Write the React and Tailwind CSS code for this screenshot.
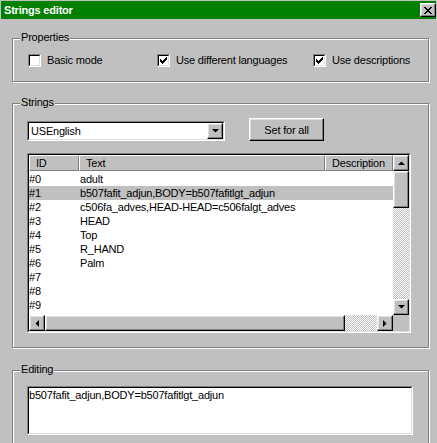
import React from "react";

// classic 3D edges
const raised =
  "border border-t-white border-l-white border-r-black border-b-black shadow-[inset_-1px_-1px_0_#808080,inset_1px_1px_0_#dfdfdf]";
const checker =
  "bg-[repeating-conic-gradient(#c0c0c0_0_25%,#fff_0_50%)] bg-[length:2px_2px]";

const rows = [
  ["#0", "adult"],
  ["#1", "b507fafit_adjun,BODY=b507fafitlgt_adjun"],
  ["#2", "c506fa_adves,HEAD-HEAD=c506falgt_adves"],
  ["#3", "HEAD"],
  ["#4", "Top"],
  ["#5", "R_HAND"],
  ["#6", "Palm"],
  ["#7", ""],
  ["#8", ""],
  ["#9", ""],
  ["#10", ""],
];

function Sunken({ className = "", innerClassName = "", children }) {
  return (
    <div
      className={`border border-t-[#808080] border-l-[#808080] border-r-white border-b-white ${className}`}
    >
      <div
        className={`h-full border border-t-black border-l-black border-r-[#dfdfdf] border-b-[#dfdfdf] ${innerClassName}`}
      >
        {children}
      </div>
    </div>
  );
}

function Group({ label, className = "", children }) {
  return (
    <div
      className={`relative ml-[12px] w-[417px] border border-[#808080] shadow-[inset_1px_1px_0_#fff,1px_1px_0_#fff] ${className}`}
    >
      <span className="absolute -top-[9px] left-[7px] bg-[#c0c0c0] px-px leading-[14px]">
        {label}
      </span>
      {children}
    </div>
  );
}

function Arrow({ dir }) {
  const pts = {
    up: "0,4 7,4 3.5,0.5",
    down: "0,0 7,0 3.5,3.5",
    left: "4,0 4,7 0.5,3.5",
    right: "0,0 0,7 3.5,3.5",
  }[dir];
  const vertical = dir === "up" || dir === "down";
  return (
    <svg
      width={vertical ? 7 : 4}
      height={vertical ? 4 : 7}
      viewBox={vertical ? "0 0 7 4" : "0 0 4 7"}
    >
      <polygon points={pts} fill="#000" />
    </svg>
  );
}

function ScrollButton({ dir, className = "" }) {
  return (
    <div
      className={`w-[16px] h-[16px] shrink-0 flex items-center justify-center bg-[#c0c0c0] ${raised} ${className}`}
    >
      <Arrow dir={dir} />
    </div>
  );
}

function Checkbox({ checked, label, className = "" }) {
  return (
    <div className={`flex items-center gap-[6px] ${className}`}>
      <Sunken
        className="w-[13px] h-[13px] shrink-0"
        innerClassName="bg-white flex items-center justify-center"
      >
        {checked && (
          <svg width="7" height="7" viewBox="0 0 7 7" shapeRendering="crispEdges">
            <polygon points="0,2 2,4 7,-1 7,2 2,7 0,5" fill="#000" />
          </svg>
        )}
      </Sunken>
      <span className="leading-[14px]">{label}</span>
    </div>
  );
}

export default function App() {
  return (
    <div className="w-[437px] h-[443px] overflow-hidden bg-[#c0c0c0] text-[11px] tracking-[-0.2px] text-black font-['Liberation_Sans',Arial,sans-serif]">
      {/* title bar */}
      <div className="mx-px mt-px h-[18px] bg-[#008000] flex items-center justify-between pl-[3px]">
        <span className="text-white font-bold leading-[14px]">Strings editor</span>
        <div className={`w-[16px] h-[14px] flex items-center justify-center bg-[#c0c0c0] ${raised}`}>
          <svg width="8" height="7" viewBox="0 0 8 7" shapeRendering="crispEdges">
            <path d="M0 0h2l2 2.5 2-2.5h2L5 3.5 8 7H6L4 4.5 2 7H0l3-3.5z" fill="#000" />
          </svg>
        </div>
      </div>

      {/* Properties */}
      <Group label="Properties" className="mt-[19px] h-[44px]">
        <div className="flex pt-[14px] pl-[15px]">
          <Checkbox label="Basic mode" className="w-[129px]" />
          <Checkbox checked label="Use different languages" className="w-[156px]" />
          <Checkbox checked label="Use descriptions" />
        </div>
      </Group>

      {/* Strings */}
      <Group label="Strings" className="mt-[21px] h-[245px]">
        <div className="pt-[14px] pl-[14px]">
          <div className="flex items-start">
            <Sunken className="mt-[3px] w-[198px] h-[20px]" innerClassName="bg-white flex items-center">
              <span className="pl-[2px] flex-1 leading-[14px]">USEnglish</span>
              <ScrollButton dir="down" />
            </Sunken>
            <button
              className={`ml-[24px] w-[75px] h-[23px] bg-[#c0c0c0] leading-[14px] ${raised}`}
            >
              Set for all
            </button>
          </div>

          {/* list view */}
          <Sunken className="mt-[12px] w-[384px] h-[180px]" innerClassName="bg-white flex flex-col">
            <div className="flex h-[160px]">
              <div className="w-[364px] flex flex-col">
                <div className="flex h-[16px] bg-[#c0c0c0] leading-[14px]">
                  <div className="w-[50px] pl-[6px] border border-t-white border-l-white border-r-[#808080] border-b-[#808080]">ID</div>
                  <div className="w-[246px] pl-[6px] border border-t-white border-l-white border-r-[#808080] border-b-[#808080]">Text</div>
                  <div className="w-[68px] pl-[6px] border border-t-white border-l-white border-r-[#808080] border-b-[#808080]">Description</div>
                </div>
                <div className="flex-1 overflow-hidden pt-px">
                  {rows.map(([id, text], i) => (
                    <div
                      key={id}
                      className={`flex h-[14px] leading-[14px] whitespace-nowrap ${i === 1 ? "bg-[#c0c0c0]" : ""}`}
                    >
                      <span className="w-[50px]">{id}</span>
                      <span className="pl-px">{text}</span>
                    </div>
                  ))}
                </div>
              </div>
              {/* vertical scrollbar */}
              <div className={`w-[16px] flex flex-col ${checker}`}>
                <ScrollButton dir="up" />
                <div className={`h-[37px] bg-[#c0c0c0] ${raised}`} />
                <div className="flex-1" />
                <ScrollButton dir="down" />
              </div>
            </div>
            {/* horizontal scrollbar */}
            <div className="flex h-[16px]">
              <div className={`w-[364px] flex ${checker}`}>
                <ScrollButton dir="left" />
                <div className={`w-[300px] bg-[#c0c0c0] ${raised}`} />
                <div className="flex-1" />
                <ScrollButton dir="right" />
              </div>
              <div className="w-[16px] bg-[#c0c0c0]" />
            </div>
          </Sunken>
        </div>
      </Group>

      {/* Editing */}
      <Group label="Editing" className="mt-[22px] h-[90px]">
        <div className="pt-[15px] pl-[14px]">
          <Sunken className="w-[386px] h-[49px]" innerClassName="bg-white">
            <div className="leading-[14px]">b507fafit_adjun,BODY=b507fafitlgt_adjun</div>
          </Sunken>
        </div>
      </Group>
    </div>
  );
}
